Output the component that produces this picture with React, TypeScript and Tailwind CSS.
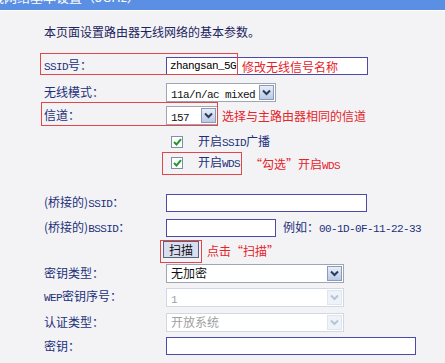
import React from "react";

const CJK = "font-['Noto_Sans_CJK_SC',sans-serif]";

function M({ children }: { children: React.ReactNode }) {
  return (
    <span className="font-['Liberation_Mono',monospace] text-[11px] tracking-[-0.6px]">{children}</span>
  );
}

function Label({ children }: { children: React.ReactNode }) {
  return (
    <div className={`w-[122px] shrink-0 text-[12px] leading-none text-[#22307a] ${CJK}`}>{children}</div>
  );
}

function Chevron({ light }: { light?: boolean }) {
  return (
    <svg width="9" height="7" viewBox="0 0 9 7">
      <path
        d="M1 1.5 L4.5 5 L8 1.5"
        fill="none"
        stroke={light ? "#b8c4d4" : "#2b3a55"}
        strokeWidth="2"
      />
    </svg>
  );
}

function Select({
  w,
  value,
  disabled,
  mono,
}: {
  w: string;
  value: React.ReactNode;
  disabled?: boolean;
  mono?: boolean;
}) {
  return (
    <div
      className={`${w} h-[19px] border bg-white flex items-center ${
        disabled ? "border-[#cfd8e3]" : "border-[#9ea6b4]"
      }`}
    >
      <div
        className={`flex-1 pl-[4px] leading-none ${
          disabled ? "text-[#a0a0a0]" : "text-[#111]"
        } ${mono ? "" : `text-[12px] ${CJK}`}`}
      >
        {value}
      </div>
      <div
        className={`w-[15px] h-[15px] mr-[1px] flex items-center justify-center border ${
          disabled
            ? "border-[#dde6f0] bg-[#eef3f9]"
            : "border-[#8d9ab3] bg-gradient-to-b from-[#e8eef9] to-[#b9c9e6]"
        }`}
      >
        <Chevron light={disabled} />
      </div>
    </div>
  );
}

function Input({ w, children }: { w: string; children?: React.ReactNode }) {
  return (
    <div className={`${w} h-[18px] border border-[#4b4ba6] bg-white flex items-center pl-[3px]`}>
      {children}
    </div>
  );
}

function Checkbox() {
  return (
    <div className="w-[12px] h-[12px] border border-[#7f8fa8] bg-white flex items-center justify-center">
      <svg width="9" height="8" viewBox="0 0 9 8">
        <path d="M1 4 L3.5 6.5 L8 1.2" fill="none" stroke="#1f9a2a" strokeWidth="2" />
      </svg>
    </div>
  );
}

function Red({ children }: { children: React.ReactNode }) {
  return <span className={`text-[12px] leading-none text-[#e5232b] ${CJK}`}>{children}</span>;
}

export default function App() {
  return (
    <div className="w-[445px] h-[363px] overflow-hidden bg-[#f3f3f5] relative">
      {/* header */}
      <div className="h-[10px] bg-[#5b8fe3] overflow-hidden relative">
        <div className={`absolute left-[-22px] top-[-13px] text-[13px] text-white whitespace-nowrap ${CJK}`}>
          无线网络基本设置（5GHz）
        </div>
      </div>
      <div className="h-[1px] bg-white" />

      {/* intro */}
      <div className={`mt-[11px] h-[20px] flex items-center pl-[44px] text-[12px] text-[#1c2460] ${CJK}`}>
        本页面设置路由器无线网络的基本参数。
      </div>

      {/* SSID */}
      <div className="mt-[13px] h-[22px] flex items-center pl-[44px] relative">
        <Label>
          <M>SSID</M>号：
        </Label>
        <Input w="w-[202px]">
          <M>zhangsan_5G</M>
          <span className="ml-[6px]">
            <Red>修改无线信号名称</Red>
          </span>
        </Input>
        <div className="absolute left-[40px] top-[-2px] w-[198px] h-[22px] border border-[#e0474c]" />
      </div>

      {/* mode */}
      <div className="mt-[4px] h-[22px] flex items-center pl-[44px]">
        <Label>无线模式：</Label>
        <Select w="w-[110px]" value={<M>11a/n/ac mixed</M>} mono />
      </div>

      {/* channel */}
      <div className="mt-[1px] h-[22px] flex items-center pl-[44px] relative">
        <Label>信道：</Label>
        <Select w="w-[52px]" value={<M>157</M>} mono />
        <span className="ml-[4px]">
          <Red>选择与主路由器相同的信道</Red>
        </span>
        <div className="absolute left-[41px] top-[-2px] w-[177px] h-[24px] border border-[#e0474c]" />
      </div>

      {/* checkbox 1 */}
      <div className="mt-[6px] h-[20px] flex items-center pl-[171px]">
        <Checkbox />
        <span className={`ml-[15px] text-[12px] leading-none text-[#22307a] ${CJK}`}>
          开启<M>SSID</M>广播
        </span>
      </div>

      {/* checkbox 2 */}
      <div className="mt-[1px] h-[20px] flex items-center pl-[171px] relative">
        <Checkbox />
        <span className={`ml-[15px] text-[12px] leading-none text-[#22307a] ${CJK}`}>
          开启<M>WDS</M>
        </span>
        <span className="ml-[10px]">
          <Red>
            “勾选”开启<M>WDS</M>
          </Red>
        </span>
        <div className="absolute left-[162px] top-[-1px] w-[80px] h-[23px] border border-[#e0474c]" />
      </div>

      {/* bridged SSID */}
      <div className="mt-[19px] h-[22px] flex items-center pl-[44px]">
        <Label>
          (桥接的)<M>SSID</M>：
        </Label>
        <Input w="w-[201px]" />
      </div>

      {/* bridged BSSID */}
      <div className="mt-[3px] h-[22px] flex items-center pl-[44px]">
        <Label>
          (桥接的)<M>BSSID</M>：
        </Label>
        <Input w="w-[110px]" />
        <span className={`ml-[7px] text-[12px] leading-none text-[#22307a] ${CJK}`}>
          例如：<M>00-1D-0F-11-22-33</M>
        </span>
      </div>

      {/* scan */}
      <div className="mt-[0px] h-[21px] flex items-center pl-[163px] relative">
        <div
          className={`w-[36px] h-[17px] border border-[#5a6478] bg-[#d9ddf0] flex items-center justify-center text-[12px] leading-none text-[#111] ${CJK}`}
        >
          扫描
        </div>
        <span className="ml-[8px]">
          <Red>点击“扫描”</Red>
        </span>
        <div className="absolute left-[160px] top-[1px] w-[42px] h-[23px] border border-[#e0474c]" />
      </div>

      {/* key type */}
      <div className="mt-[2px] h-[22px] flex items-center pl-[44px]">
        <Label>密钥类型：</Label>
        <Select w="w-[178px]" value="无加密" />
      </div>

      {/* WEP index */}
      <div className="mt-[2px] h-[22px] flex items-center pl-[44px]">
        <Label>
          <M>WEP</M>密钥序号：
        </Label>
        <Select w="w-[178px]" value={<M>1</M>} disabled mono />
      </div>

      {/* auth type */}
      <div className="mt-[3px] h-[22px] flex items-center pl-[44px]">
        <Label>认证类型：</Label>
        <Select w="w-[178px]" value="开放系统" disabled />
      </div>

      {/* key */}
      <div className="mt-[2px] h-[22px] flex items-center pl-[44px]">
        <Label>密钥：</Label>
        <Input w="w-[250px]" />
      </div>
    </div>
  );
}
